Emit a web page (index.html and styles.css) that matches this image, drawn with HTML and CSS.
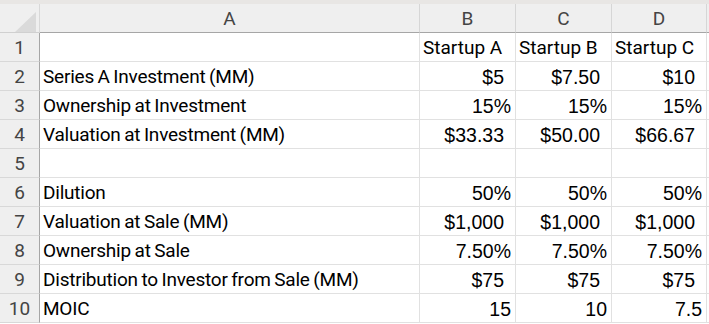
FILE: index.html
```html
<!DOCTYPE html>
<html>
<head>
<meta charset="utf-8">
<link rel="stylesheet" href="styles.css">
</head>
<body>
<div class="topband"></div>
<div class="sheet">
  <div class="corner"><span class="tri"></span></div>
  <div class="colhead">A</div>
  <div class="colhead">B</div>
  <div class="colhead">C</div>
  <div class="colhead">D</div>
  <div class="colhead rest"></div>

  <div class="rowhead">1</div>
  <div class="cell"></div>
  <div class="cell txt">Startup A</div>
  <div class="cell txt">Startup B</div>
  <div class="cell txt">Startup C</div>
  <div class="cell rest"></div>

  <div class="rowhead">2</div>
  <div class="cell txt label">Series A Investment (MM)</div>
  <div class="cell num cur">$5</div>
  <div class="cell num cur">$7.50</div>
  <div class="cell num cur">$10</div>
  <div class="cell rest"></div>

  <div class="rowhead">3</div>
  <div class="cell txt label">Ownership at Investment</div>
  <div class="cell num">15%</div>
  <div class="cell num">15%</div>
  <div class="cell num">15%</div>
  <div class="cell rest"></div>

  <div class="rowhead">4</div>
  <div class="cell txt label">Valuation at Investment (MM)</div>
  <div class="cell num cur">$33.33</div>
  <div class="cell num cur">$50.00</div>
  <div class="cell num cur">$66.67</div>
  <div class="cell rest"></div>

  <div class="rowhead">5</div>
  <div class="cell"></div>
  <div class="cell"></div>
  <div class="cell"></div>
  <div class="cell"></div>
  <div class="cell rest"></div>

  <div class="rowhead">6</div>
  <div class="cell txt label">Dilution</div>
  <div class="cell num">50%</div>
  <div class="cell num">50%</div>
  <div class="cell num">50%</div>
  <div class="cell rest"></div>

  <div class="rowhead">7</div>
  <div class="cell txt label">Valuation at Sale (MM)</div>
  <div class="cell num cur">$1,000</div>
  <div class="cell num cur">$1,000</div>
  <div class="cell num cur">$1,000</div>
  <div class="cell rest"></div>

  <div class="rowhead">8</div>
  <div class="cell txt label">Ownership at Sale</div>
  <div class="cell num">7.50%</div>
  <div class="cell num">7.50%</div>
  <div class="cell num">7.50%</div>
  <div class="cell rest"></div>

  <div class="rowhead">9</div>
  <div class="cell txt label">Distribution to Investor from Sale (MM)</div>
  <div class="cell num cur">$75</div>
  <div class="cell num cur">$75</div>
  <div class="cell num cur">$75</div>
  <div class="cell rest"></div>

  <div class="rowhead">10</div>
  <div class="cell txt label">MOIC</div>
  <div class="cell num">15</div>
  <div class="cell num">10</div>
  <div class="cell num">7.5</div>
  <div class="cell rest"></div>
</div>
</body>
</html>
```
FILE: styles.css
```css
html, body {
  margin: 0;
  padding: 0;
  background: #ffffff;
  width: 709px;
  height: 324px;
  overflow: hidden;
}

.topband {
  height: 4px;
  background: #e8e6e4;
}

.sheet {
  display: grid;
  grid-template-columns: 40px 380px 96px 96px 95px 1fr;
  grid-auto-rows: 29px;
  font-family: "Roboto", "Liberation Sans", sans-serif;
  font-size: 19px;
  color: #000;
}

.sheet > div {
  box-sizing: border-box;
  white-space: nowrap;
  overflow: visible;
  line-height: 27px;
  padding-top: 1px;
}

.corner {
  position: relative;
  background: #efefef;
  border-right: 1px solid #d8d8d8;
  border-bottom: 1px solid #d0d0d0;
}

.tri {
  position: absolute;
  left: 15px;
  top: 8px;
  width: 0;
  height: 0;
  border-left: 21px solid transparent;
  border-bottom: 20px solid #dadada;
}

.colhead {
  background: #efefef;
  color: #444;
  text-align: center;
  border-right: 1px solid #d6d6d6;
  border-bottom: 1px solid #a6a6a6;
}

.colhead.rest {
  border-right: none;
}

.rowhead {
  background: #efefef;
  color: #444;
  text-align: center;
  border-right: 1px solid #a6a6a6;
  border-bottom: 1px solid #d8d8d8;
}

.cell {
  border-right: 1px solid #e1e1e1;
  border-bottom: 1px solid #e1e1e1;
  position: relative;
  z-index: 0;
}

.cell.rest {
  border-right: none;
}

.txt {
  padding-left: 3px;
  z-index: 1;
}

.label {
  letter-spacing: -0.22px;
  word-spacing: -0.9px;
}

.num {
  font-family: "Liberation Sans", Arial, sans-serif;
  font-size: 19.5px;
  text-align: right;
  padding-right: 4px;
  padding-top: 2px !important;
}

.num.cur {
  padding-right: 11px;
}
```
